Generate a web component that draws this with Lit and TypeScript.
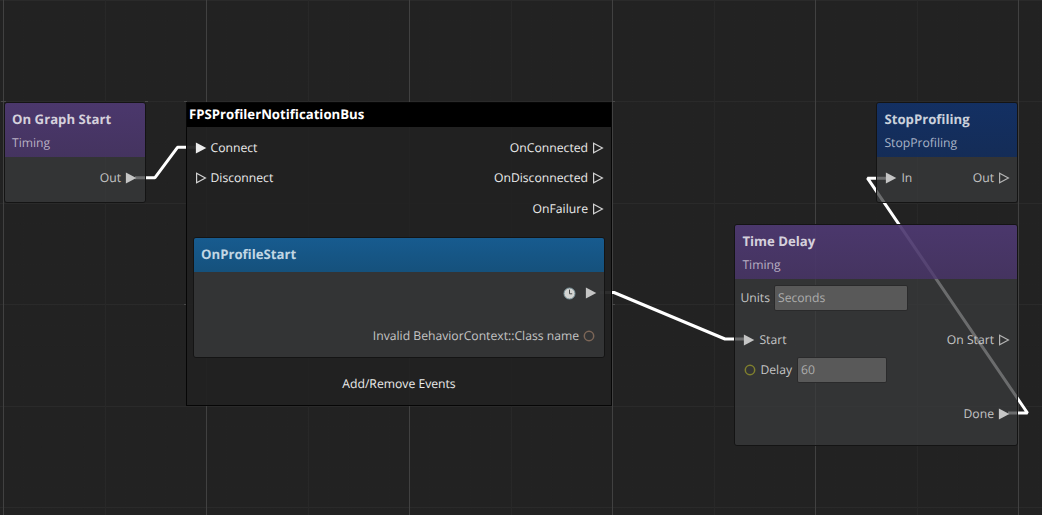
import { LitElement, html, css, svg, nothing } from "lit";
import { customElement, property } from "lit/decorators.js";

type Pin = { label?: string; on?: boolean; kind?: "exec" | "data"; color?: string; clock?: boolean; field?: { text: string; width: number } };

@customElement("pin-icon")
export class PinIcon extends LitElement {
  @property({ type: Boolean }) on = false;
  @property() kind = "exec";
  @property() color = "#7c6657";

  static styles = css`
    :host { display: block; flex: none; height: 12px; }
    svg { display: block; }
  `;

  render() {
    return this.kind === "data"
      ? html`<svg width="12" height="12" viewBox="0 0 12 12"><circle cx="6" cy="6" r="4.7" fill="none" stroke=${this.color} stroke-width="1.5" /></svg>`
      : html`<svg width="12" height="12" viewBox="0 0 12 12">
          ${this.on
            ? svg`<path d="M.9 .6 11.3 6 .9 11.4Z" fill="currentColor" />`
            : svg`<path d="M1.6 1.3 10.4 6 1.6 10.7Z" fill="none" stroke="currentColor" stroke-width="1.2" opacity=".88" />`}
        </svg>`;
  }
}

@customElement("pin-row")
export class PinRow extends LitElement {
  @property({ attribute: false }) input?: Pin;
  @property({ attribute: false }) output?: Pin;

  static styles = css`
    :host { display: flex; justify-content: space-between; align-items: center; height: 30.5px; padding: 0 7px 0 8px; box-sizing: border-box; }
    .pin { display: flex; align-items: center; gap: 4px; white-space: nowrap; }
    .out { margin-left: auto; }
    .data { padding-left: 1px; }
    .out.data { padding: 0 2px 0 0; }
    .field { box-sizing: border-box; height: 26px; line-height: 24px; padding-left: 3px; margin-left: 1px; background: #595959; border: 1px solid #2a2a2b; border-radius: 2px; color: #adadad; }
    .clock { display: block; margin-right: 5px; padding-top: 1px; }
  `;

  private clock() {
    return html`<svg class="clock" width="13" height="13" viewBox="0 0 13 13">
      <circle cx="6.5" cy="6.5" r="5.5" fill="#d3d4d2" stroke="#7d979f" stroke-width="1" />
      <path d="M6.5 2.6v4.2h2.7" fill="none" stroke="#494b4b" stroke-width="1" />
    </svg>`;
  }

  private icon(p: Pin) {
    return html`<pin-icon ?on=${p.on} kind=${p.kind ?? "exec"} color=${p.color ?? "#7c6657"}></pin-icon>`;
  }

  render() {
    const i = this.input, o = this.output;
    return html`
      ${i ? html`<div class="pin ${i.kind ?? ""}">${this.icon(i)}<span>${i.label}</span>
        ${i.field ? html`<span class="field" style="width:${i.field.width}px">${i.field.text}</span>` : nothing}</div>` : nothing}
      ${o ? html`<div class="pin out ${o.kind ?? ""}">${o.clock ? this.clock() : nothing}${o.label ? html`<span>${o.label}</span>` : nothing}${this.icon(o)}</div>` : nothing}
    `;
  }
}

@customElement("graph-node")
export class GraphNode extends LitElement {
  @property() heading = "";
  @property() sub = "";
  @property() tone = "purple";

  static styles = css`
    :host { display: flex; flex-direction: column; box-sizing: border-box; border: 1px solid #141414; border-radius: 3px; overflow: hidden; color: #c5c5c5; }
    header { box-sizing: border-box; padding: 4px 6px 0 7px; height: 54px; flex: none; }
    h2 { margin: 0; font-size: 13.2px; line-height: 24px; font-weight: 700; color: #d5d0dc; }
    p { margin: 0; line-height: 24px; color: #b9b0c4; }
    .purple { background: linear-gradient(rgba(78, 57, 114, .93), rgba(71, 53, 100, .93)); }
    .navy { background: linear-gradient(rgba(18, 49, 104, .93), rgba(19, 45, 91, .93)); }
    .navy h2 { color: #cad1dc; }
    .navy p { color: #a9b4c7; }
    .blue { background: linear-gradient(#175b8f, #15517c); height: 34px; }
    .blue h2 { color: #c1d6e4; }
    .body { flex: 1; background: rgba(58, 59, 60, .75); }
  `;

  render() {
    return html`<header class=${this.tone}><h2>${this.heading}</h2>${this.sub ? html`<p>${this.sub}</p>` : nothing}</header>
      <div class="body"><slot></slot></div>`;
  }
}

@customElement("app-root")
export class AppRoot extends LitElement {
  static styles = css`
    :host { display: block; position: relative; width: 1042px; height: 515px; overflow: hidden; background: #222; font: 12.18px/16px "Open Sans", "Noto Sans", sans-serif; text-rendering: geometricPrecision; }
    .layer { position: absolute; inset: 0; display: block; }
    .node { position: absolute; }
    .start { left: 4px; top: 102px; width: 142px; height: 101px; }
    .start pin-row { padding-right: 8px; }
    .stop { left: 876.4px; top: 102px; width: 141.6px; height: 101px; }
    .start .rows, .stop .rows { padding-top: 5.5px; }
    .delay { left: 734.4px; top: 224px; width: 283.6px; height: 222px; }
    .bus { left: 186px; top: 102px; width: 426px; height: 304px; box-sizing: border-box; border: 1px solid #060606; display: flex; flex-direction: column; background: rgba(34, 34, 34, .95); color: #ececec; }
    .bus h1 { margin: 0; height: 24px; padding-left: 2px; font-size: 13.2px; line-height: 23px; background: #000; color: #fff; flex: none; }
    .bus .ports { box-sizing: border-box; padding-top: 5.7px; height: 110px; }
    .bus .ports pin-row { padding: 0 7px 0 7.5px; }
    .event { margin: 0 6px; height: 121px; }
    .event .rows { padding-top: 5.5px; }
    .event .rows pin-row + pin-row { margin-top: 12.5px; }
    .add { text-align: center; line-height: 20px; padding-top: 16px; }
    .units { display: flex; align-items: center; gap: 4px; padding: 6px 0 0 5px; }
    .select { box-sizing: border-box; width: 134.5px; height: 26px; line-height: 24px; padding-left: 3px; border: 1px solid #2a2a2b; border-radius: 2px; background: #595959; color: #adadad; }
    .delay .rows { padding-top: 13.7px; }
    .delay .rows .done { margin-top: 12.8px; }
  `;

  private grid() {
    const v = Array.from({ length: 11 }, (_, i) => i), h = [0, 1, 2, 3, 4, 5];
    const sub = Array.from({ length: 52 }, (_, i) => i);
    return svg`
      ${sub.map(i => svg`<path d="M${3.5 + i * 20.3} 0V515" stroke="#262626" stroke-dasharray="1 2" opacity=".65" />`)}
      ${sub.slice(0, 26).map(i => svg`<path d="M0 ${0.5 + i * 20.3}H1042" stroke="#262626" stroke-dasharray="1 2" opacity=".5" />`)}
      ${h.map(i => svg`<rect x="0" y=${Math.floor(i * 101.5)} width="1042" height="1" fill="#2a2a2a" />`)}
      ${v.map(i => svg`<rect x=${Math.floor(3 + i * 101.5 + .5)} y="0" width="1" height="515" fill=${i % 2 ? "#282828" : "#414141"} />`)}
      <path d="M1 101.5H6M145 101.5h3M184 101.5h3M184 304.5h3M612 101.5h3M612 304.5h3" stroke="#484848" />
    `;
  }

  render() {
    return html`
      <svg class="layer" width="1042" height="515" viewBox="0 0 1042 515">
        ${this.grid()}
        <g fill="none" stroke="#fff" stroke-width="3" stroke-linejoin="bevel">
          <path d="M135 177.7H155L177.5 147.3H196" />
          <path d="M600 292.5H614L725 339H744" />
          <path d="M1008 413H1027.5L867.5 178.2H887" />
        </g>
      </svg>
      <graph-node class="node start" heading="On Graph Start" sub="Timing">
        <div class="rows"><pin-row .output=${{ label: "Out", on: true }}></pin-row></div>
      </graph-node>
      <section class="node bus">
        <h1>FPSProfilerNotificationBus</h1>
        <div class="ports">
          <pin-row .input=${{ label: "Connect", on: true }} .output=${{ label: "OnConnected" }}></pin-row>
          <pin-row .input=${{ label: "Disconnect" }} .output=${{ label: "OnDisconnected" }}></pin-row>
          <pin-row .output=${{ label: "OnFailure" }}></pin-row>
        </div>
        <graph-node class="event" heading="OnProfileStart" tone="blue">
          <div class="rows">
            <pin-row .output=${{ on: true, clock: true }}></pin-row>
            <pin-row .output=${{ label: "Invalid BehaviorContext::Class name", kind: "data" }}></pin-row>
          </div>
        </graph-node>
        <div class="add">Add/Remove Events</div>
      </section>
      <graph-node class="node stop" heading="StopProfiling" sub="StopProfiling" tone="navy">
        <div class="rows"><pin-row .input=${{ label: "In", on: true }} .output=${{ label: "Out" }}></pin-row></div>
      </graph-node>
      <graph-node class="node delay" heading="Time Delay" sub="Timing">
        <div class="units"><span>Units</span><span class="select">Seconds</span></div>
        <div class="rows">
          <pin-row .input=${{ label: "Start", on: true }} .output=${{ label: "On Start" }}></pin-row>
          <pin-row .input=${{ label: "Delay", kind: "data", color: "#7f7f2d", field: { text: "60", width: 90 } }}></pin-row>
          <pin-row class="done" .output=${{ label: "Done", on: true }}></pin-row>
        </div>
      </graph-node>
    `;
  }
}
